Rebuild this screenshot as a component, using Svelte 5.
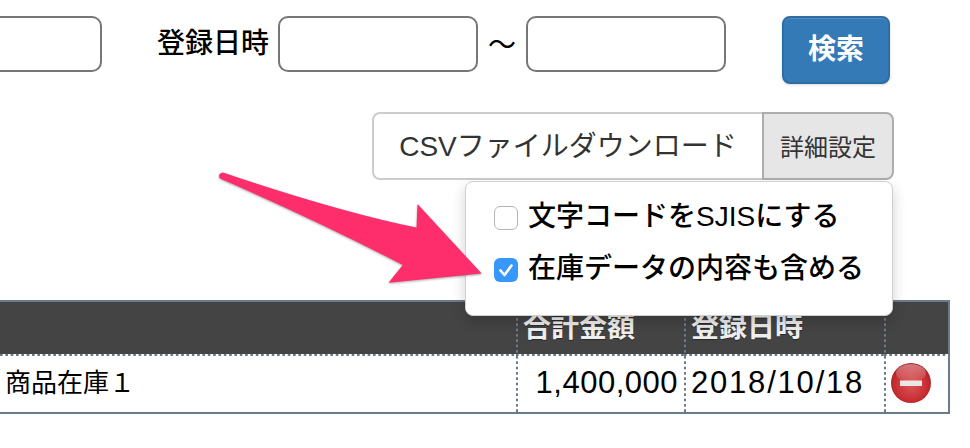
<script>
  let options = [
    { label: "文字コードをSJISにする", checked: false },
    { label: "在庫データの内容も含める", checked: true }
  ];
</script>

<div class="page">
  <div class="search">
    <input class="field first" type="text" />
    <span class="label">登録日時</span>
    <input class="field" type="text" />
    <span class="tilde">〜</span>
    <input class="field" type="text" />
    <button class="search-btn">検索</button>
  </div>

  <div class="download-row">
    <div class="download">
      <button class="csv">CSVファイルダウンロード</button>
      <button class="detail">詳細設定</button>
      <div class="popover">
        {#each options as opt}
          <label class="option">
            <span class="box" class:on={opt.checked}>
              {#if opt.checked}
                <svg width="24" height="24" viewBox="0 0 24 24">
                  <path d="M6.5 12.5 L10.5 17 L17.5 7.5" fill="none" stroke="#fff" stroke-width="2.6" stroke-linecap="round" stroke-linejoin="round" />
                </svg>
              {/if}
            </span>
            <span class="text">{opt.label}</span>
          </label>
        {/each}
      </div>
    </div>
  </div>

  <div class="table">
    <div class="cell head"></div>
    <div class="cell head dotted">合計金額</div>
    <div class="cell head dotted">登録日時</div>
    <div class="cell head dotted"></div>

    <div class="cell name">商品在庫１</div>
    <div class="cell num dotted">1,400,000</div>
    <div class="cell date dotted">2018/10/18</div>
    <div class="cell dotted icon">
      <svg width="42" height="42" viewBox="0 0 42 42">
        <defs>
          <radialGradient id="red" cx="50%" cy="55%" r="55%">
            <stop offset="0%" stop-color="#d9575b" />
            <stop offset="70%" stop-color="#c92f33" />
            <stop offset="100%" stop-color="#a82226" />
          </radialGradient>
          <linearGradient id="shine" x1="0" y1="0" x2="0" y2="1">
            <stop offset="0%" stop-color="#fff" stop-opacity="0.4" />
            <stop offset="100%" stop-color="#fff" stop-opacity="0.05" />
          </linearGradient>
        </defs>
        <circle cx="21" cy="21" r="20" fill="url(#red)" />
        <ellipse cx="21" cy="11" rx="15" ry="9" fill="url(#shine)" />
        <rect x="10" y="18.5" width="22" height="5.5" fill="#efe6e6" />
      </svg>
    </div>
  </div>

  <svg class="arrow" width="970" height="448" viewBox="0 0 970 448">
    <path
      d="M223 172.5 Q340 212 416.5 227.5 L417.5 204 L481.7 273.5 L388.5 282.7 L402.7 265 Q320 222 220 178.5 Q217 174 223 172.5 Z"
      fill="#fe2e6c" />
  </svg>
</div>

<style>
  :global(body) {
    margin: 0;
    background: #fff;
  }

  .page {
    --dot-v: linear-gradient(#6b7b8c 50%, transparent 50%);
    --dot-h: linear-gradient(90deg, #6b7b8c 50%, transparent 50%);
    position: relative;
    width: 970px;
    height: 448px;
    overflow: hidden;
    font-family: "Liberation Sans", "Noto Sans CJK JP", sans-serif;
    color: #000;
  }

  .search {
    display: flex;
    align-items: flex-start;
    padding-top: 16px;
    margin-left: -20px;
  }

  .field {
    box-sizing: border-box;
    width: 200px;
    height: 56px;
    border: 2px solid #767676;
    border-radius: 10px;
    background: #fff;
    padding: 0;
  }

  .field.first {
    width: 122px;
    margin-right: 55px;
  }

  .label {
    width: 121px;
    font-size: 28px;
    line-height: 56px;
    font-weight: 500;
    white-space: nowrap;
  }

  .tilde {
    width: 48px;
    padding-top: 2px;
    text-align: center;
    font-size: 28px;
    line-height: 56px;
  }

  .search-btn {
    box-sizing: border-box;
    width: 108px;
    height: 68px;
    margin-left: 56px;
    border: 2px solid #2e6da4;
    border-radius: 8px;
    background: #337ab7;
    color: #fff;
    font: 700 28px "Liberation Sans", "Noto Sans CJK JP", sans-serif;
    box-shadow: inset 0 1px 0 rgba(255, 255, 255, 0.15), 0 1px 3px rgba(0, 0, 0, 0.15);
    padding: 0 0 6px;
  }

  .download-row {
    display: flex;
    justify-content: flex-end;
    margin-top: 28px;
    padding-right: 76px;
  }

  .download {
    position: relative;
    display: flex;
    height: 68px;
  }

  .csv,
  .detail {
    box-sizing: border-box;
    height: 68px;
    font-family: "Liberation Sans", "Noto Sans CJK JP", sans-serif;
    color: #333;
  }

  .csv {
    width: 390px;
    border: 2px solid #ccc;
    border-right: 0;
    border-radius: 8px 0 0 8px;
    background: #fff;
    font-size: 28px;
    padding: 0 0 4px;
  }

  .detail {
    width: 132px;
    border: 2px solid #adadad;
    border-radius: 0 8px 8px 0;
    background: #e6e6e6;
    font-size: 24px;
    padding: 0 0 2px;
  }

  .popover {
    position: absolute;
    z-index: 2;
    top: 69px;
    right: 1px;
    box-sizing: border-box;
    width: 428px;
    height: 135px;
    padding: 10px 0 0 28px;
    background: #fff;
    border: 1px solid #d0d0d0;
    border-radius: 8px;
    box-shadow: 0 6px 14px rgba(0, 0, 0, 0.18);
  }

  .option {
    display: flex;
    align-items: center;
    gap: 10px;
    height: 52px;
    font-size: 28px;
    font-weight: 500;
    white-space: nowrap;
  }

  .text {
    margin-bottom: 8px;
  }

  .box {
    box-sizing: border-box;
    width: 24px;
    height: 24px;
    flex: none;
    border: 1px solid #b5b5b5;
    border-radius: 6px;
    background: #fff;
  }

  .box.on {
    border: 0;
    background: #3797fb;
  }

  .box svg {
    display: block;
  }

  .table {
    display: grid;
    grid-template-columns: 516px 168px 200px 64px;
    grid-template-rows: 54px 56px;
    box-sizing: border-box;
    width: 950px;
    margin-top: 120px;
    border-top: 2px solid #6b7b8c;
    border-bottom: 2px solid #6b7b8c;
    border-right: 2px solid #6b7b8c;
  }

  .cell {
    box-sizing: border-box;
    white-space: nowrap;
  }

  .dotted {
    padding-left: 2px;
    background: var(--dot-v) left top / 2px 5.33px repeat-y;
  }

  .head {
    color: #eee;
    font-size: 28px;
    font-weight: 700;
    line-height: 52px;
    padding-left: 5px;
    text-shadow: 0 1px 1px rgba(0, 0, 0, 0.4);
    background:
      var(--dot-h) left bottom / 5.33px 2px repeat-x,
      linear-gradient(#444, #444) left top / 100% 52px no-repeat;
  }

  .head.dotted {
    padding-left: 7px;
    background:
      var(--dot-v) left top / 2px 5.33px repeat-y,
      var(--dot-h) left bottom / 5.33px 2px repeat-x,
      linear-gradient(#444, #444) left top / 100% 52px no-repeat;
  }

  .name {
    font-size: 26px;
    line-height: 54px;
    padding-left: 5px;
  }

  .num,
  .date {
    font-size: 31px;
    line-height: 54px;
  }

  .num {
    letter-spacing: 0.5px;
    text-align: right;
    padding-right: 6px;
  }

  .date {
    letter-spacing: 1.8px;
    padding-left: 7px;
  }

  .icon {
    padding: 6px 0 0 6px;
  }

  .icon svg {
    display: block;
  }

  .arrow {
    position: absolute;
    z-index: 3;
    top: 0;
    left: 0;
    pointer-events: none;
    filter: drop-shadow(0 1px 1px rgba(0, 0, 0, 0.35));
  }
</style>
